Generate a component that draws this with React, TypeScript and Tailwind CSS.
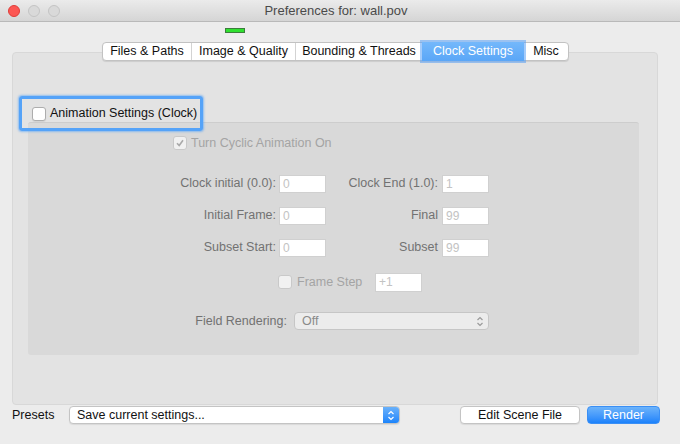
import React from 'react';

const font = { fontFamily: '"Liberation Sans", Arial, sans-serif' };

const Check: React.FC<{ checked?: boolean; disabled?: boolean }> = ({ checked, disabled }) => (
  <div
    className={
      'w-[14px] h-[14px] rounded-[3px] border flex items-center justify-center shrink-0 ' +
      (disabled ? 'bg-[#f1f1f1] border-[#c9c9c9]' : 'bg-white border-[#adadad] shadow-[0_1px_1px_rgba(0,0,0,0.08)]')
    }
  >
    {checked && (
      <svg width="10" height="10" viewBox="0 0 10 10">
        <path d="M2 5.2 L4.2 7.5 L8 2.3" fill="none" stroke={disabled ? '#a9a9a9' : '#333'} strokeWidth="1.6" />
      </svg>
    )}
  </div>
);

const Field: React.FC<{ value: string; w?: string }> = ({ value, w = 'w-[47px] h-[18px]' }) => (
  <div className={`${w} bg-white border border-[#d0d0d0] text-[12px] leading-[16px] pl-[3px] text-[#c3c3c3]`}>
    {value}
  </div>
);

const Updown: React.FC<{ color: string }> = ({ color }) => (
  <svg width="8" height="11" viewBox="0 0 8 11">
    <path d="M1.5 4 L4 1.5 L6.5 4 M1.5 7 L4 9.5 L6.5 7" fill="none" stroke={color} strokeWidth="1.2" />
  </svg>
);

const FieldRow: React.FC<{ l1: string; v1: string; l2: string; v2: string }> = ({ l1, v1, l2, v2 }) => (
  <div className="flex items-center h-[18px] whitespace-nowrap">
    <div className="w-[251px] text-right pr-[3px] text-[12.5px] text-[#727272]">{l1}</div>
    <Field value={v1} />
    <div className="w-[116px] text-right pr-[4px] text-[12.5px] text-[#727272]">{l2}</div>
    <Field value={v2} />
  </div>
);

export default function App() {
  return (
    <div className="w-[680px] h-[444px] bg-[#ececec] flex flex-col overflow-hidden whitespace-nowrap" style={font}>
      {/* title bar */}
      <div className="h-[22px] shrink-0 flex items-center relative bg-gradient-to-b from-[#ebebeb] to-[#d5d5d5] border-b border-[#b9b9b9]">
        <div className="flex gap-[8px] pl-[8px]">
          <div className="w-[12px] h-[12px] rounded-full bg-[#fc5753] border border-[#df3d39]" />
          <div className="w-[12px] h-[12px] rounded-full bg-[#d9d9d9] border border-[#c4c4c4]" />
          <div className="w-[12px] h-[12px] rounded-full bg-[#d9d9d9] border border-[#c4c4c4]" />
        </div>
        <div className="flex-1 text-center text-[13px] text-[#4a4a4a] pr-[68px]">Preferences for: wall.pov</div>
      </div>

      {/* green indicator */}
      <div className="h-[20px] shrink-0 flex items-start pl-[225px] pt-[6px]">
        <div className="w-[20px] h-[5px] bg-[#2fe02f] border border-[#3b7d3b]" />
      </div>

      {/* tabs */}
      <div className="relative z-10 flex pl-[102px] h-[19px] shrink-0">
        <div className="flex bg-white border border-[#c2c2c2] rounded-[4px] shadow-[0_1px_1px_rgba(0,0,0,0.1)] text-[12.5px] text-[#111] leading-[17px]">
          <div className="w-[89px] text-center border-r border-[#d3d3d3]">Files &amp; Paths</div>
          <div className="w-[104px] text-center border-r border-[#d3d3d3]">Image &amp; Quality</div>
          <div className="w-[126px] text-center">Bounding &amp; Threads</div>
          <div className="w-[102px] text-center text-white bg-gradient-to-b from-[#74b8fb] to-[#5aa6f7] -my-[1px] leading-[19px] shadow-[0_0_0_2px_rgba(90,160,245,0.55)]">
            Clock Settings
          </div>
          <div className="w-[44px] text-center">Misc</div>
        </div>
      </div>

      {/* tab panel */}
      <div className="-mt-[9px] mx-[12px] w-[646px] h-[353px] shrink-0 bg-[#e3e3e3] border border-[#d8d8d8] rounded-[4px] flex flex-col">
        <div className="relative z-10 ml-[6px] mt-[43px] w-[184px] h-[35px] rounded-[3px] border-[3px] border-[#55a3f8] shadow-[0_0_2px_1px_rgba(85,163,248,0.6)] flex items-center gap-[4px] pl-[10px]">
          <Check />
          <span className="text-[12.5px] text-[#111]">Animation Settings (Clock)</span>
        </div>
        <div className="-mt-[9px] ml-[15px] w-[611px] h-[233px] bg-[#d9d9d9] border-t border-[#cdcdcd] rounded-[3px] flex flex-col">
          <div className="flex items-center gap-[4px] pl-[145px] mt-[11px]">
            <Check checked disabled />
            <span className="text-[12.5px] text-[#a4a4a4]">Turn Cyclic Animation On</span>
          </div>
          <div className="flex flex-col gap-[14px] mt-[22px]">
            <FieldRow l1="Clock initial (0.0):" v1="0" l2="Clock End (1.0):" v2="1" />
            <FieldRow l1="Initial Frame:" v1="0" l2="Final" v2="99" />
            <FieldRow l1="Subset Start:" v1="0" l2="Subset" v2="99" />
          </div>
          <div className="flex items-center mt-[16px] h-[19px]">
            <div className="pl-[250px] flex items-center gap-[5px] w-[347px]">
              <Check disabled />
              <span className="text-[12.5px] text-[#a4a4a4]">Frame Step</span>
            </div>
            <Field value="+1" w="w-[47px] h-[19px]" />
          </div>
          <div className="flex items-center mt-[20px]">
            <div className="w-[266px] text-right pr-[7px] text-[12.5px] text-[#727272]">Field Rendering:</div>
            <div className="w-[195px] h-[18px] rounded-[4px] bg-[#ececec] border border-[#c6c6c6] flex items-center justify-between pl-[7px] pr-[4px]">
              <span className="text-[12.5px] text-[#8a8a8a]">Off</span>
              <Updown color="#9a9a9a" />
            </div>
          </div>
        </div>
      </div>

      {/* bottom bar */}
      <div className="flex items-center h-[18px] mt-[1px] shrink-0">
        <span className="pl-[12px] w-[69px] text-[12.5px] text-[#111]">Presets</span>
        <div className="w-[331px] h-[18px] flex rounded-[4px] border border-[#c4c4c4] bg-white overflow-hidden shadow-[0_1px_1px_rgba(0,0,0,0.08)]">
          <span className="flex-1 pl-[7px] text-[12.5px] leading-[16px] text-[#111]">Save current settings...</span>
          <div className="w-[16px] bg-gradient-to-b from-[#69b1fa] to-[#1a84fb] flex items-center justify-center">
            <Updown color="#ffffff" />
          </div>
        </div>
        <div className="ml-[60px] w-[120px] h-[18px] rounded-[4px] border border-[#c4c4c4] bg-white text-center text-[12.5px] leading-[16px] text-[#111] shadow-[0_1px_1px_rgba(0,0,0,0.08)]">
          Edit Scene File
        </div>
        <div className="ml-[7px] w-[73px] h-[18px] rounded-[4px] bg-gradient-to-b from-[#6cb3fa] to-[#1b82fb] border border-[#3a8ff5] text-center text-[12.5px] leading-[16px] text-white">
          Render
        </div>
      </div>
    </div>
  );
}
